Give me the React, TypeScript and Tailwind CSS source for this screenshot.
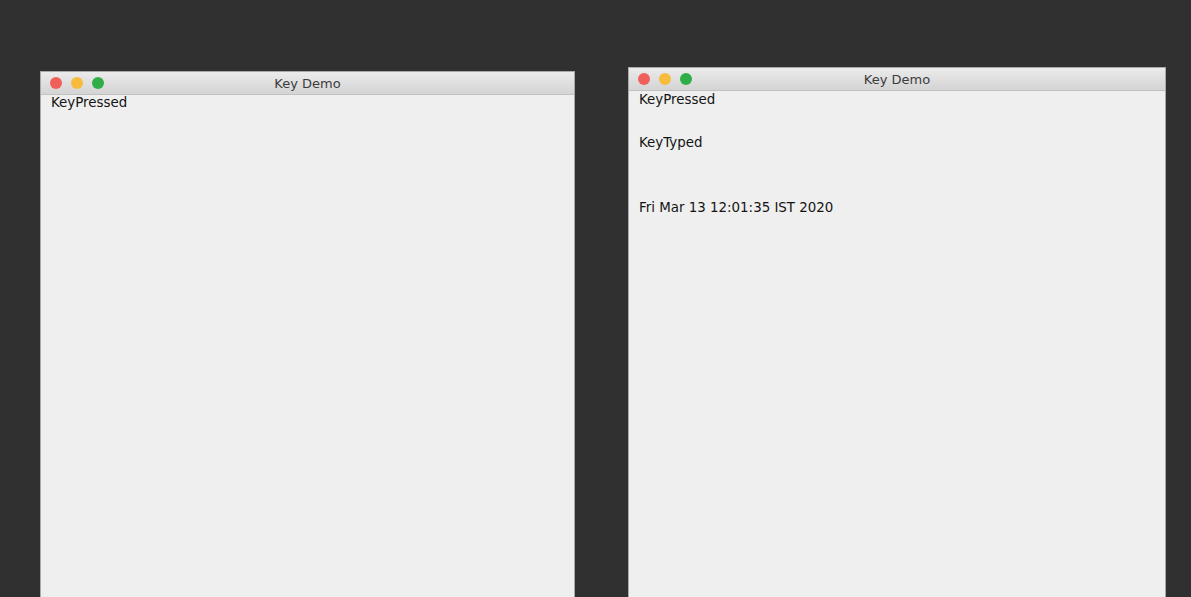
import React from 'react';

const Lights = () => (
  <div className="flex items-center gap-[9px] pl-[9px]">
    <span className="w-3 h-3 rounded-full bg-[#f0605a]" />
    <span className="w-3 h-3 rounded-full bg-[#f7bc3b]" />
    <span className="w-3 h-3 rounded-full bg-[#2fae48]" />
  </div>
);

const Window = ({ className, children }: { className: string; children: React.ReactNode }) => (
  <div className={`flex flex-col border border-[#a9a9a9] bg-[#efefef] h-[560px] ${className}`}>
    <div className="relative flex items-center h-[23px] bg-gradient-to-b from-[#ebebeb] to-[#d4d4d4] border-b border-[#c2c2c2]">
      <Lights />
      <span className="absolute inset-x-0 text-center text-[13px] text-[#3c3c3c] leading-[23px]">Key Demo</span>
    </div>
    <div className="flex flex-col pl-[10px] text-[13.4px] leading-4 text-[#141414]">{children}</div>
  </div>
);

export default function App() {
  return (
    <div
      className="w-[1191px] h-[597px] overflow-hidden bg-[#303030] flex items-start gap-[53px] pl-[40px]"
      style={{ fontFamily: '"DejaVu Sans", "Liberation Sans", sans-serif' }}
    >
      <Window className="w-[535px] mt-[71px]">
        <span>KeyPressed</span>
      </Window>
      <Window className="w-[538px] mt-[67px]">
        <span className="pt-[1px]">KeyPressed</span>
        <span className="mt-[27px]">KeyTyped</span>
        <span className="mt-[49px]">Fri Mar 13 12:01:35 IST 2020</span>
      </Window>
    </div>
  );
}
